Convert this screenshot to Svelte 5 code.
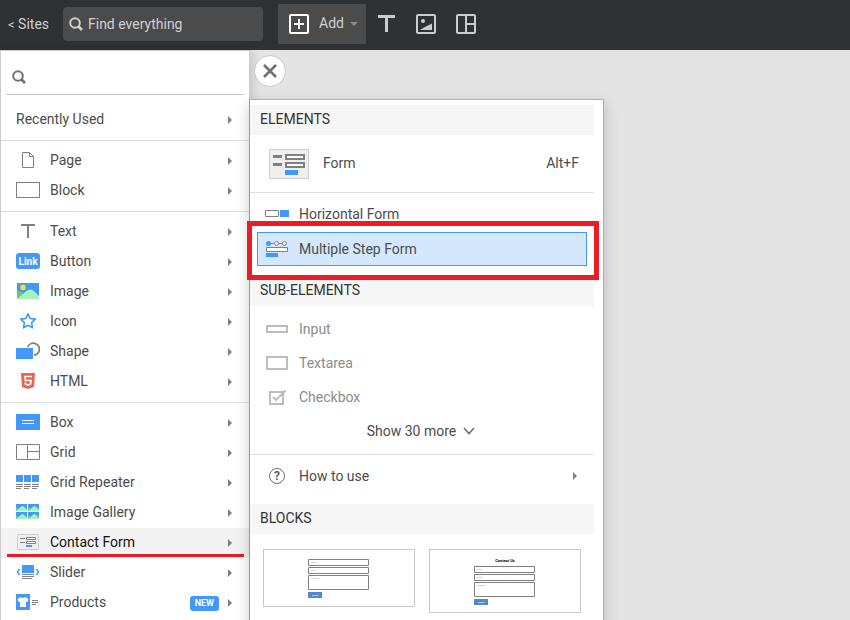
<script>
  const groups = [
    [{ label: 'Recently Used' }],
    [
      { label: 'Page', icon: 'page' },
      { label: 'Block', icon: 'block' },
    ],
    [
      { label: 'Text', icon: 'text' },
      { label: 'Button', icon: 'button' },
      { label: 'Image', icon: 'image' },
      { label: 'Icon', icon: 'star' },
      { label: 'Shape', icon: 'shape' },
      { label: 'HTML', icon: 'html' },
    ],
    [
      { label: 'Box', icon: 'box' },
      { label: 'Grid', icon: 'grid' },
      { label: 'Grid Repeater', icon: 'repeater' },
      { label: 'Image Gallery', icon: 'gallery' },
      { label: 'Contact Form', icon: 'form' },
      { label: 'Slider', icon: 'slider' },
      { label: 'Products', icon: 'products', badge: 'NEW' },
    ],
  ];

  const elements = [
    { label: 'Horizontal Form', icon: 'horizontal' },
    { label: 'Multiple Step Form', icon: 'steps' },
  ];

  const subElements = [
    { label: 'Input', icon: 'input' },
    { label: 'Textarea', icon: 'textarea' },
    { label: 'Checkbox', icon: 'checkbox' },
  ];

  const blocks = [
    { title: '', height: 56, top: 9 },
    { title: 'Contact Us', height: 62, top: 16 },
  ];

  let current = $state('Contact Form');
  let selected = $state('Multiple Step Form');
</script>

{#snippet magnifier()}
  <svg width="14" height="14" viewBox="0 0 14 14" aria-hidden="true">
    <circle cx="6" cy="6" r="4.8" fill="none" stroke="currentColor" stroke-width="2" />
    <path d="M9.5 9.5L13 13" stroke="currentColor" stroke-width="2.6" />
  </svg>
{/snippet}

{#snippet arrow()}
  <svg width="4" height="8" viewBox="0 0 4 8" aria-hidden="true">
    <path d="M0 0L4 4L0 8Z" fill="#808080" />
  </svg>
{/snippet}

{#snippet icon(name)}
  <svg width="24" height="18" viewBox="0 0 24 18" aria-hidden="true">
    {#if name === 'page'}
      <path d="M6.5 1.5H13.5L17.5 5.5V16.5H6.5Z" fill="none" stroke="#808080" />
      <path d="M13.5 1.5V5.5H17.5" fill="none" stroke="#808080" />
    {:else if name === 'block'}
      <rect x="0.5" y="1.5" width="23" height="15" fill="none" stroke="#808080" />
    {:else if name === 'text'}
      <path d="M5 3H19M12 3V16" fill="none" stroke="#808080" stroke-width="2" />
    {:else if name === 'button'}
      <rect y="1" width="24" height="16" rx="3" fill="#4299fb" />
      <text x="12" y="13" text-anchor="middle" class="link-text">Link</text>
    {:else if name === 'image'}
      <path d="M1 1H23V17H1Z" fill="#4299fb" />
      <path d="M1 8L7 11L3 17H1Z" fill="#5fcf7f" />
      <path d="M1 17L8 11Q14 5 18 9L23 14V17Z" fill="#a5f3b5" />
      <circle cx="7" cy="5.5" r="2.7" fill="#ffe900" />
    {:else if name === 'star'}
      <path
        d="M12 1.8L14.2 6.5L19.3 7.1L15.6 10.6L16.5 15.8L12 13.3L7.5 15.8L8.4 10.6L4.7 7.1L9.8 6.5Z"
        fill="none"
        stroke="#4299fb"
        stroke-width="1.6"
        stroke-linejoin="round"
      />
    {:else if name === 'shape'}
      <path d="M11.8 5A6 6 0 1 1 18 13.2" fill="none" stroke="#808080" stroke-width="1.8" />
      <path d="M0 6H17V17H0Z" fill="#4299fb" />
    {:else if name === 'html'}
      <path d="M5 1H19L18 15L12 17L6 15Z" fill="#ec6352" />
      <path d="M16 4.5H9L9.3 8.5H15L14.6 12L12 13L9.4 12L9.2 10.5" fill="none" stroke="#fff" stroke-width="1.7" />
    {:else if name === 'box'}
      <path d="M0 1H24V17H0Z" fill="#4299fb" />
      <path d="M6 7.5H18M6 10.5H18" stroke="#fff" />
    {:else if name === 'grid'}
      <path d="M0.5 1.5H23.5V16.5H0.5ZM11.5 1.5V16.5M11.5 8.5H23.5" fill="none" stroke="#808080" />
    {:else if name === 'repeater'}
      <path d="M0 2H7V9H0ZM8 2H15V9H8ZM16 2H23V9H16Z" fill="#4299fb" />
      <path
        d="M0 11.5H7M8 11.5H15M16 11.5H23M0 13.5H7M8 13.5H15M16 13.5H23M0 15.5H5M8 15.5H13M16 15.5H21"
        stroke="#808080"
      />
    {:else if name === 'gallery'}
      {#each [[0, 1], [12, 1], [0, 9], [12, 9]] as [x, y]}
        <g transform="translate({x} {y})">
          <path d="M0 0H11V7H0Z" fill="#4299fb" />
          <path d="M0 3L3 5L1 7H0Z" fill="#5fcf7f" />
          <path d="M0 7L6 2Q8 2 11 6V7Z" fill="#a5f3b5" />
        </g>
      {/each}
    {:else if name === 'form'}
      <path d="M1.5 1.5H22.5V16.5H1.5Z" fill="#efefef" stroke="#ccc" />
      <path d="M4 5.5H9M4 9.5H9" stroke="#808080" />
      <path d="M10.5 4.5H19.5V6.5H10.5ZM10.5 8.5H19.5V10.5H10.5Z" fill="#fff" stroke="#808080" />
      <path d="M10 12H16V14H10Z" fill="#4299fb" />
    {:else if name === 'slider'}
      <path d="M6 2H18V10H6Z" fill="#4299fb" />
      <path d="M6 11.5H18M6 13.5H18M6 15.5H16" stroke="#808080" />
      <path d="M3.5 6L1.5 9L3.5 12M20.5 6L22.5 9L20.5 12" fill="none" stroke="#4299fb" stroke-width="1.4" />
    {:else if name === 'products'}
      <path d="M0 1H14V17H0Z" fill="#4299fb" />
      <path d="M4.5 4Q7 6 9.5 4L12.5 6L11.5 9L10 8.5V14H4V8.5L2.5 9L1.5 6Z" fill="#fff" />
      <path d="M16 7.5H22M16 9.5H22M16 11.5H20" stroke="#808080" />
    {:else if name === 'horizontal'}
      <path d="M0.5 5.5H13.5V11.5H0.5Z" fill="#fff" stroke="#808080" />
      <path d="M15 5H24V12H15Z" fill="#4299fb" />
    {:else if name === 'steps'}
      <path d="M4 3.5H9" stroke="#4299fb" />
      <path d="M13 3.5H17" stroke="#808080" />
      <circle cx="3.5" cy="3.5" r="2.5" fill="#4299fb" />
      <circle cx="11.5" cy="3.5" r="2" fill="#fff" stroke="#808080" />
      <circle cx="19.5" cy="3.5" r="2" fill="#fff" stroke="#808080" />
      <path d="M1.5 7.5H22.5V11.5H1.5Z" fill="#fff" stroke="#808080" />
      <path d="M1 13H13V17H1Z" fill="#4299fb" />
    {:else if name === 'input'}
      <path d="M2 6H22V12H2Z" fill="none" stroke="#bdbdbd" stroke-width="2" />
    {:else if name === 'textarea'}
      <path d="M2 3H22V15H2Z" fill="none" stroke="#bdbdbd" stroke-width="2" />
    {:else if name === 'checkbox'}
      <path d="M5 4H18V16H5Z" fill="none" stroke="#bdbdbd" stroke-width="2" />
      <path d="M8 9L11 12L20.5 2.5" fill="none" stroke="#bdbdbd" stroke-width="2" />
    {:else if name === 'help'}
      <circle cx="12" cy="9" r="7.5" fill="none" stroke="#707070" />
      <text x="12" y="13" text-anchor="middle" class="help-text">?</text>
    {/if}
  </svg>
{/snippet}

<div class="editor">
  <header>
    <a class="back" href="#sites"><span class="lt">&lt;</span> Sites</a>
    <label class="find">
      {@render magnifier()}
      <input type="text" placeholder="Find everything" aria-label="Find everything" />
    </label>
    <button class="add">
      <svg width="20" height="20" viewBox="0 0 20 20" aria-hidden="true">
        <rect x="1" y="1" width="18" height="18" rx="1" fill="none" stroke="#fff" stroke-width="2" />
        <path d="M10 5V15M5 10H15" stroke="#fff" stroke-width="2" />
      </svg>
      <span>Add</span>
      <svg width="8" height="4" viewBox="0 0 8 4" aria-hidden="true">
        <path d="M0 0H8L4 4Z" fill="#8a8a8a" />
      </svg>
    </button>
    <nav class="tools">
      <button aria-label="Text">
        <svg width="20" height="20" viewBox="0 0 20 20">
          <path d="M2 2.5H19M10.5 2.5V18" fill="none" stroke="#ccc" stroke-width="3" />
        </svg>
      </button>
      <button aria-label="Image">
        <svg width="20" height="20" viewBox="0 0 20 20">
          <rect x="1" y="1" width="18" height="18" rx="1" fill="none" stroke="#ccc" stroke-width="2" />
          <circle cx="7" cy="7" r="2" fill="#ccc" />
          <path d="M4 16L9 13L16 9.5V16Z" fill="#ccc" />
        </svg>
      </button>
      <button aria-label="Layout">
        <svg width="20" height="20" viewBox="0 0 20 20">
          <rect x="1" y="1" width="18" height="18" rx="1" fill="none" stroke="#ccc" stroke-width="2" />
          <path d="M10 1V19M10 10H19" fill="none" stroke="#ccc" stroke-width="2" />
        </svg>
      </button>
    </nav>
  </header>

  <main>
    <aside>
      <label class="filter">
        {@render magnifier()}
        <input type="text" aria-label="Filter elements" />
      </label>
      {#each groups as group}
        <div class="group">
          {#each group as item}
            <button class="row" class:current={item.label === current} onclick={() => (current = item.label)}>
              <span class="name">
                {#if item.icon}{@render icon(item.icon)}{/if}
                {item.label}
              </span>
              {#if item.badge}<span class="badge">{item.badge}</span>{/if}
              {@render arrow()}
            </button>
          {/each}
        </div>
      {/each}
    </aside>

    <div class="flyout">
      <button class="close" aria-label="Close">
        <svg width="14" height="14" viewBox="0 0 14 14">
          <path d="M1 1L13 13M13 1L1 13" stroke="#707070" stroke-width="2.6" />
        </svg>
      </button>

      <section class="panel">
        <h2>ELEMENTS</h2>
        <button class="main-item">
          <svg width="40" height="30" viewBox="0 0 40 30" aria-hidden="true">
            <path d="M0.5 0.5H39.5V29.5H0.5Z" fill="#efefef" stroke="#ccc" />
            <path d="M4 7.5H13M4 15.5H13" stroke="#808080" stroke-width="3" />
            <path d="M17 6H35V10H17ZM17 14H35V18H17Z" fill="#fff" stroke="#808080" stroke-width="2" />
            <path d="M16 21H29V26H16Z" fill="#4299fb" />
          </svg>
          <span>Form</span>
          <kbd>Alt+F</kbd>
        </button>

        <div class="items ruled">
          {#each elements as item}
            <button class="item" class:selected={item.label === selected} onclick={() => (selected = item.label)}>
              {@render icon(item.icon)}
              <span>{item.label}</span>
            </button>
          {/each}
        </div>

        <h2>SUB-ELEMENTS</h2>
        <div class="items sub">
          {#each subElements as item}
            <button class="item muted">
              {@render icon(item.icon)}
              <span>{item.label}</span>
            </button>
          {/each}
          <button class="more">
            <span>Show 30 more</span>
            <svg width="12" height="8" viewBox="0 0 12 8" aria-hidden="true">
              <path d="M1 1L6 6.5L11 1" fill="none" stroke="#707070" stroke-width="1.6" />
            </svg>
          </button>
        </div>

        <div class="items ruled">
          <button class="item">
            {@render icon('help')}
            <span>How to use</span>
            {@render arrow()}
          </button>
        </div>

        <h2>BLOCKS</h2>
        <div class="blocks">
          {#each blocks as block}
            <button class="block" aria-label={block.title || 'Form'}>
              <svg viewBox="0 0 150 {block.height}">
                {#if block.title}
                  <text x="75" y="12" text-anchor="middle" class="thumb-title">{block.title}</text>
                {/if}
                <g transform="translate(44 {block.top})">
                  <path d="M0.5 0.5H60.5V6.5H0.5ZM0.5 8.5H60.5V14.5H0.5ZM0.5 16.5H60.5V30.5H0.5Z" fill="#fff" stroke="#808080" />
                  <text x="3" y="4" class="thumb-hint">Name</text>
                  <text x="3" y="12" class="thumb-hint">Email</text>
                  <text x="3" y="20" class="thumb-hint">Message</text>
                  <path d="M0 33H14V39H0Z" fill="#5088cc" />
                  <text x="7" y="37" text-anchor="middle" class="thumb-submit">Submit</text>
                </g>
              </svg>
            </button>
          {/each}
        </div>
      </section>
    </div>
  </main>
</div>

<style>
  :global(body) {
    margin: 0;
    background: #e4e4e4;
  }

  .editor {
    display: flex;
    flex-direction: column;
    height: 100vh;
    overflow: hidden;
    font-family: Roboto, "Liberation Sans", sans-serif;
    font-size: 14px;
    line-height: 20px;
    color: #4c4c4c;
  }

  button,
  input,
  kbd {
    font: inherit;
    color: inherit;
  }

  button {
    border: 0;
    padding: 0;
    background: none;
    text-align: left;
    cursor: pointer;
  }

  svg {
    display: block;
    flex: none;
  }

  input {
    flex: 1;
    min-width: 0;
    border: 0;
    padding: 0;
    background: none;
    outline: none;
  }

  /* Top bar */
  header {
    display: flex;
    align-items: center;
    flex: none;
    height: 50px;
    padding: 0 8px;
    box-sizing: border-box;
    background: #2f3235;
    color: #d0d0d0;
  }

  .back {
    width: 55px;
    padding-bottom: 2px;
    color: inherit;
    text-decoration: none;
  }

  .lt {
    font-size: 13px;
  }

  .find {
    display: flex;
    align-items: center;
    gap: 5px;
    width: 200px;
    height: 34px;
    margin-bottom: 2px;
    padding: 0 6px;
    box-sizing: border-box;
    border-radius: 4px;
    background: #4b4b4b;
  }

  .find input::placeholder {
    color: #d0d0d0;
    opacity: 1;
  }

  .add {
    display: flex;
    align-items: center;
    width: 88px;
    height: 40px;
    margin: 0 10px 2px 15px;
    padding: 0 8px 0 11px;
    box-sizing: border-box;
    background: #4b4b4b;
  }

  .add span {
    flex: 1;
    padding: 0 0 2px 10px;
  }

  .tools {
    display: flex;
    gap: 20px;
    padding-bottom: 2px;
  }

  /* Sidebar */
  main {
    display: flex;
    flex: 1;
    min-height: 0;
  }

  aside {
    width: 250px;
    box-sizing: border-box;
    border: 1px solid #ccc;
    border-width: 1px 1px 0;
    background: #fff;
    box-shadow: 2px 0 10px rgba(0, 0, 0, 0.15);
  }

  .filter {
    display: flex;
    align-items: center;
    gap: 8px;
    height: 44px;
    margin: 0 5px 5px;
    padding: 9px 6px 0;
    box-sizing: border-box;
    border-bottom: 1px solid #c4c4c4;
    color: #707070;
  }

  .group {
    padding: 5px 0;
  }

  .group + .group {
    border-top: 1px solid #e0e0e0;
  }

  .row {
    position: relative;
    display: flex;
    align-items: center;
    width: 100%;
    height: 30px;
    padding: 0 17px 0 15px;
  }

  .row.current {
    background: #f3f3f3;
    color: #111;
  }

  .row.current::after {
    content: "";
    position: absolute;
    right: 5px;
    bottom: 1px;
    left: 6px;
    height: 3px;
    background: #ed1c24;
  }

  .name {
    display: flex;
    align-items: center;
    flex: 1;
    gap: 10px;
    padding-bottom: 2px;
  }

  .badge {
    margin-right: 9px;
    padding: 0 5px;
    border-radius: 3px;
    background: #4299fb;
    color: #fff;
    font-size: 9px;
    font-weight: 700;
    line-height: 15px;
  }

  .link-text {
    fill: #fff;
    font-size: 10px;
    font-weight: 700;
  }

  .help-text {
    fill: #606060;
    font-size: 12px;
    font-weight: 700;
  }

  /* Flyout */
  .flyout {
    position: relative;
    width: 355px;
    margin-left: -1px;
  }

  .close {
    display: flex;
    align-items: center;
    justify-content: center;
    width: 32px;
    height: 32px;
    margin: 5px 5px 12px;
    box-sizing: border-box;
    border: 1px solid #c8c8c8;
    border-radius: 50%;
    background: #fff;
  }

  .panel {
    min-height: 100%;
    padding: 5px 9px 0 0;
    box-sizing: border-box;
    border: 1px solid #b0b0b0;
    border-left-color: #999;
    background: #fff;
    box-shadow: 0 5px 14px rgba(0, 0, 0, 0.2);
  }

  h2 {
    height: 30px;
    margin: 0;
    padding: 4px 10px;
    box-sizing: border-box;
    background: #f6f6f6;
    color: #333;
    font-size: 14px;
    font-weight: 400;
  }

  .main-item {
    display: flex;
    align-items: center;
    gap: 14px;
    width: 100%;
    height: 57px;
    padding: 0 15px 0 19px;
  }

  .main-item span {
    flex: 1;
  }

  .main-item span,
  .main-item kbd {
    padding-bottom: 2px;
  }

  .items {
    padding: 5px 7px 10px;
  }

  .ruled {
    border-top: 1px solid #e0e0e0;
  }

  .sub {
    padding: 7px 7px 5px;
  }

  .item {
    position: relative;
    display: flex;
    align-items: center;
    gap: 10px;
    width: 100%;
    height: 34px;
    padding: 0 10px 2px 8px;
    box-sizing: border-box;
  }

  .item span {
    flex: 1;
  }

  .item.muted {
    color: #8c8c8c;
  }

  .item.selected {
    padding: 0 9px 1px 7px;
    border: 1px solid #4299fb;
    background: #d3e8ff;
  }

  .item.selected::after {
    content: "";
    position: absolute;
    inset: -12px -13px -15px -11px;
    border: 5px solid #ed1c24;
  }

  .more {
    display: flex;
    align-items: center;
    justify-content: center;
    gap: 7px;
    width: 100%;
    height: 34px;
    padding: 0 2px 2px 0;
  }

  .blocks {
    display: grid;
    grid-template-columns: 1fr 1fr;
    align-items: start;
    gap: 14px;
    padding: 15px 13px;
  }

  .block {
    border: 1px solid #c8c8c8;
    background: #fff;
  }

  .block svg {
    width: 100%;
  }

  .thumb-title {
    fill: #000;
    font-size: 4px;
    font-weight: 700;
  }

  .thumb-hint {
    fill: #999;
    font-size: 2px;
  }

  .thumb-submit {
    fill: #fff;
    font-size: 2px;
    font-weight: 700;
  }
</style>
